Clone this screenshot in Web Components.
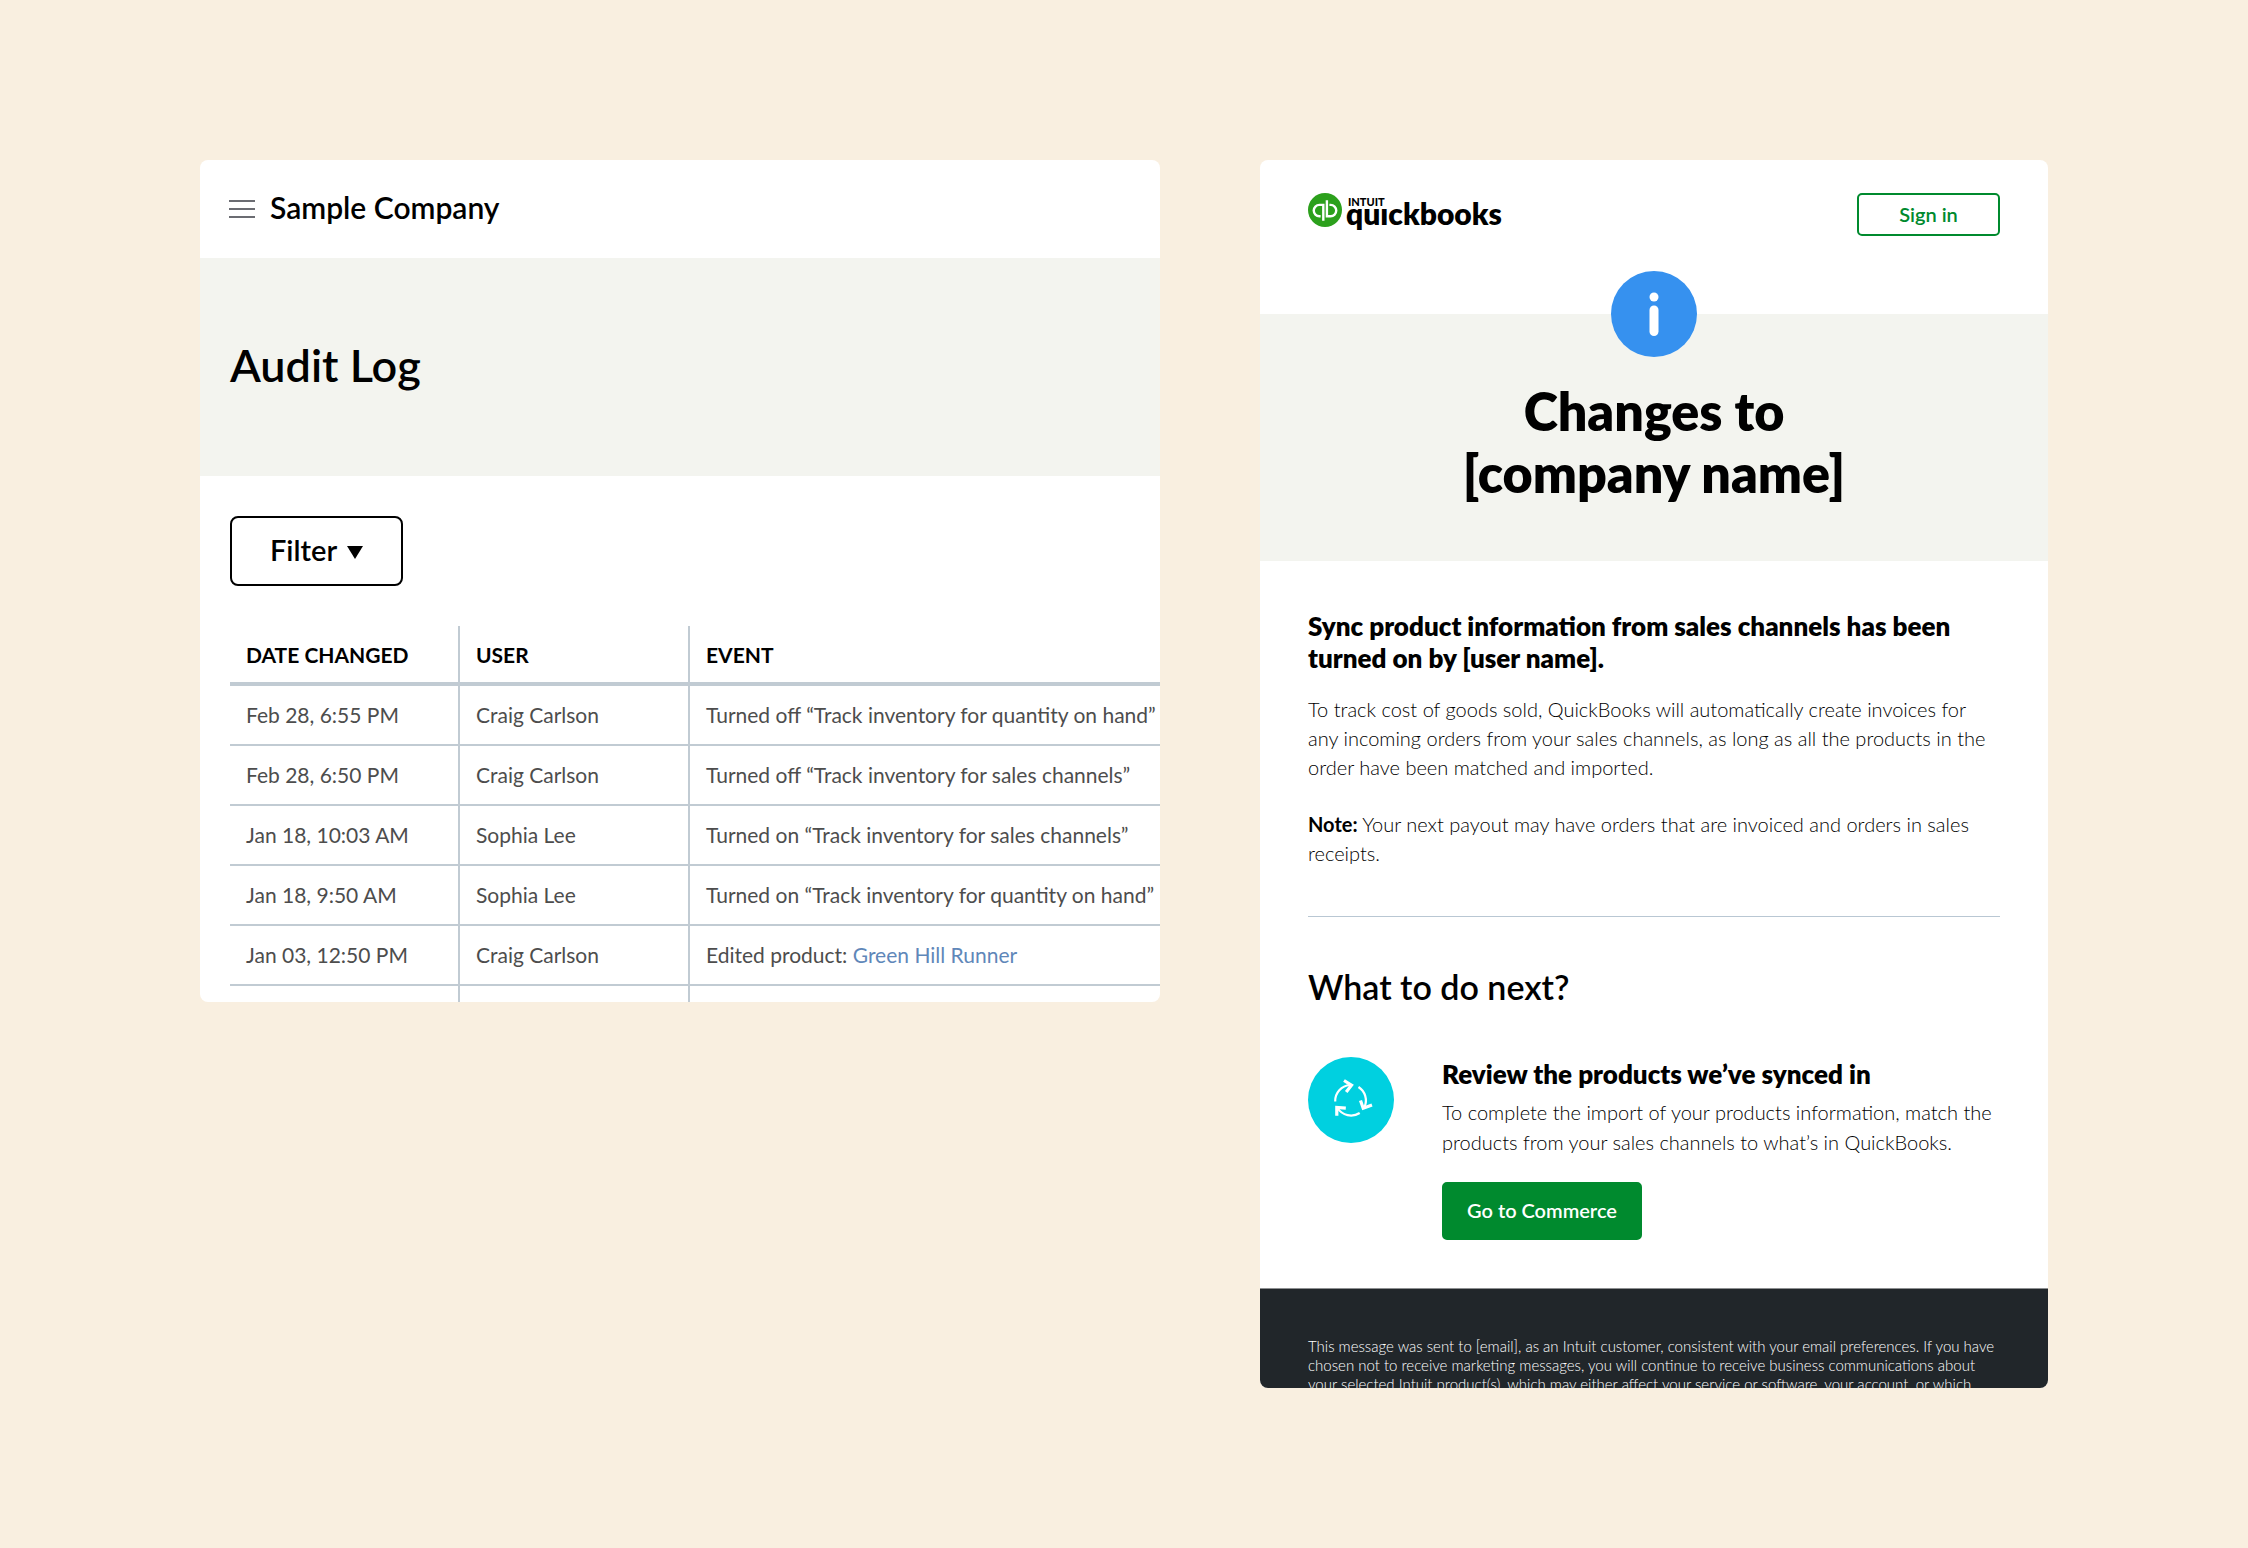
<!DOCTYPE html>
<html lang="en">
<head>
<meta charset="utf-8">
<title>Audit Log and notification email</title>
<style>
  html { background: #f9efe0; }
  body {
    margin: 0;
    font-family: Lato, "Noto Sans", sans-serif;
    color: #000;
  }
</style>
</head>
<body>
<page-stage>
  <audit-card slot="left"></audit-card>
  <email-card slot="right"></email-card>
</page-stage>

<script>
const define = (name, markup) => {
  const template = document.createElement('template');
  template.innerHTML = markup;
  customElements.define(name, class extends HTMLElement {
    constructor() {
      super();
      this.attachShadow({ mode: 'open' }).append(template.content.cloneNode(true));
    }
  });
};

define('page-stage', `
<style>
  :host { display: grid; grid-template-columns: 960fr 788fr; gap: 100px; align-items: start; padding: 160px 200px; }
</style>
<slot name="left"></slot>
<slot name="right"></slot>`);

define('app-header', `
<style>
  :host { display: flex; align-items: center; gap: 14px; padding: 28px; height: 42px; }
  button { display: block; padding: 0; border: 0; background: none; line-height: 0; }
  span { padding-bottom: 4px; font-size: 30px; font-weight: 600; line-height: 38px; }
</style>
<button type="button" aria-label="Menu">
  <svg width="28" height="20" viewBox="0 0 28 20" fill="none" stroke="#6b6c72" stroke-width="2">
    <path d="M1 2h26M1 10h26M1 18h26"/>
  </svg>
</button>
<span><slot></slot></span>`);

define('filter-button', `
<style>
  :host { display: block; }
  button {
    display: flex; align-items: center; gap: 10px; padding: 0 38px 2px; height: 70px;
    border: 2px solid #000; border-radius: 8px; background: #fff; color: #000;
    font: 600 29px/40px Lato, sans-serif;
  }
  svg { padding-top: 4px; }
</style>
<button type="button"><slot></slot>
  <svg width="16" height="14" viewBox="0 0 16 14"><path d="M0 1h16L8 14z"/></svg>
</button>`);

define('audit-table', `
<style>
  :host { display: block; }
  table { width: 100%; border-collapse: separate; border-spacing: 0; table-layout: fixed; }
  .narrow { width: 230px; }
  th, td {
    box-sizing: border-box; height: 60px; padding: 0 16px 1px; text-align: left; white-space: nowrap;
    font-size: 21px; line-height: 28px; border-right: 2px solid #c1cbd3;
  }
  th { padding: 2px 16px 0; font-weight: 700; border-bottom: 4px solid #c1cbd3; }
  td { color: #4d4d4d; border-bottom: 2px solid #c1cbd3; }
  th:last-child, td:last-child { border-right: 0; }
  .next td { height: 16px; border-bottom: 0; }
  a { color: #5f87b9; text-decoration: none; }
</style>
<table>
  <colgroup><col class="narrow"><col class="narrow"><col></colgroup>
  <thead><tr><th scope="col">DATE CHANGED</th><th scope="col">USER</th><th scope="col">EVENT</th></tr></thead>
  <tbody>
    <tr><td>Feb 28, 6:55 PM</td><td>Craig Carlson</td><td>Turned off “Track inventory for quantity on hand”</td></tr>
    <tr><td>Feb 28, 6:50 PM</td><td>Craig Carlson</td><td>Turned off “Track inventory for sales channels”</td></tr>
    <tr><td>Jan 18, 10:03 AM</td><td>Sophia Lee</td><td>Turned on “Track inventory for sales channels”</td></tr>
    <tr><td>Jan 18, 9:50 AM</td><td>Sophia Lee</td><td>Turned on “Track inventory for quantity on hand”</td></tr>
    <tr><td>Jan 03, 12:50 PM</td><td>Craig Carlson</td><td>Edited product: <a href="#">Green Hill Runner</a></td></tr>
    <tr class="next"><td></td><td></td><td></td></tr>
  </tbody>
</table>`);

define('audit-card', `
<style>
  :host { display: block; background: #fff; border-radius: 8px; overflow: hidden; }
  .title { background: #f3f4ef; padding: 78px 30px 82px; }
  h1 { margin: 0; font-size: 45px; line-height: 58px; font-weight: 600; }
  .body { padding: 40px 0 0 30px; display: grid; gap: 40px; justify-items: start; }
  audit-table { width: 100%; }
</style>
<app-header>Sample Company</app-header>
<div class="title"><h1>Audit Log</h1></div>
<div class="body">
  <filter-button>Filter</filter-button>
  <audit-table></audit-table>
</div>`);

define('brand-logo', `
<style>
  :host { display: flex; gap: 4px; align-items: flex-start; }
  .words { position: relative; padding-top: 2px; }
  .name { display: block; font-size: 30px; line-height: 36px; font-weight: 800; }
  .maker { position: absolute; left: 2px; top: 3px; padding: 0 4px 1px 0; background: #fff; font-size: 11px; line-height: 11px; font-weight: 900; }
</style>
<svg width="34" height="34" viewBox="0 0 34 34" fill="none">
  <circle cx="17" cy="17" r="17" fill="#2ca01c"/>
  <path d="M12.600 23.200H11.400A5.650 5.650 0 0 1 11.400 11.900H15.300V27.800M21.400 11.900H22.600A5.650 5.650 0 0 1 22.600 23.200H18.900V7.200" stroke="#fff" stroke-width="2.400"/>
</svg>
<div class="words"><span class="name">quickbooks</span><span class="maker">INTUIT</span></div>`);

define('action-button', `
<style>
  :host { display: block; }
  button {
    box-sizing: border-box; display: block; height: 58px; padding: 0 20px 2px; border: 2px solid #008a2e; border-radius: 5px;
    background: #008a2e; color: #fff; font: 600 20px/28px Lato, sans-serif; min-width: 200px;
  }
  :host([outline]) button { height: 43px; min-width: 143px; background: #fff; color: #008a2e; }
</style>
<button type="button"><slot></slot></button>`);

define('info-badge', `
<style>:host { display: block; line-height: 0; }</style>
<svg width="86" height="86" viewBox="0 0 86 86" role="img" aria-label="Information">
  <circle cx="43" cy="43" r="43" fill="#3691ef"/>
  <circle cx="43" cy="26" r="4.500" fill="#fff"/>
  <rect x="38.500" y="34.500" width="9" height="30.500" rx="4.500" fill="#fff"/>
</svg>`);

define('sync-badge', `
<style>:host { display: block; line-height: 0; }</style>
<svg width="86" height="86" viewBox="0 0 86 86" fill="none" role="img" aria-label="Sync">
  <circle cx="43" cy="43" r="43" fill="#00d0e0"/>
  <g stroke="#fff" stroke-width="2.200">
    <path d="M27.200 44.500A16 16 0 0 1 42 28"/>
    <path d="M50.500 30A16 16 0 0 1 56.500 50"/>
    <path d="M51.700 56A16 16 0 0 1 29.500 51"/>
  </g>
  <g stroke="#fff" stroke-width="3.200">
    <path d="M36 23.500L43.500 28.200L38.200 35"/>
    <path d="M52.500 43.500L55.200 51.200L64 48"/>
    <path d="M28.800 58.700V50.500L37.800 51.200"/>
  </g>
</svg>`);

define('next-step', `
<style>
  :host { display: grid; grid-template-columns: 86px 1fr; gap: 48px; align-items: start; }
  h3 { margin: 0 0 6px; font-size: 26px; line-height: 34px; font-weight: 800; }
  p { margin: 0 0 25px; font-size: 20px; line-height: 30px; font-weight: 300; }
</style>
<slot name="icon"></slot>
<div>
  <h3><slot name="title"></slot></h3>
  <p><slot></slot></p>
  <slot name="action"></slot>
</div>`);

define('email-footer', `
<style>
  :host { display: block; box-sizing: border-box; max-height: 100px; overflow: hidden; padding: 48px 48px 0; border-top: 1px solid #8d8f91; background: #21262a; color: #fff; }
  p { margin: 0; font-size: 15px; line-height: 19px; font-weight: 300; }
</style>
<p><slot></slot></p>`);

define('email-card', `
<style>
  :host { display: block; background: #fff; border-radius: 8px; overflow: hidden; }
  header { display: flex; justify-content: space-between; align-items: flex-start; padding: 33px 48px 78px; }
  .hero { display: flex; flex-direction: column; align-items: center; padding-bottom: 57px; background: #f3f4ef; text-align: center; }
  info-badge { margin: -43px 0 23px; }
  h1 { margin: 0; font-size: 52px; line-height: 62px; font-weight: 800; }
  main { padding: 49px 48px 48px; }
  h2 { margin: 0 0 21px; font-size: 26px; line-height: 32px; font-weight: 800; }
  p { margin: 0 0 28px; font-size: 20px; line-height: 29px; font-weight: 300; }
  b { font-weight: 700; }
  hr { margin: 48px 0; border: 0; border-top: 1px solid #b9c7d3; }
  h2.next { margin: 0 0 48px; font-size: 34px; line-height: 44px; font-weight: 600; }
</style>
<header>
  <brand-logo></brand-logo>
  <action-button outline>Sign in</action-button>
</header>
<section class="hero">
  <info-badge></info-badge>
  <h1>Changes to<br>[company name]</h1>
</section>
<main>
  <h2>Sync product information from sales channels has been turned on by [user name].</h2>
  <p>To track cost of goods sold, QuickBooks will automatically create invoices for any incoming orders from your sales channels, as long as all the products in the order have been matched and imported.</p>
  <p><b>Note:</b> Your next payout may have orders that are invoiced and orders in sales receipts.</p>
  <hr>
  <h2 class="next">What to do next?</h2>
  <next-step>
    <sync-badge slot="icon"></sync-badge>
    <span slot="title">Review the products we’ve synced in</span>
    To complete the import of your products information, match the products from your sales channels to what’s in QuickBooks.
    <action-button slot="action">Go to Commerce</action-button>
  </next-step>
</main>
<email-footer>This message was sent to [email], as an Intuit customer, consistent with your email preferences. If you have chosen not to receive marketing messages, you will continue to receive business communications about your selected Intuit product(s), which may either affect your service or software, your account, or which</email-footer>`);
</script>
</body>
</html>
